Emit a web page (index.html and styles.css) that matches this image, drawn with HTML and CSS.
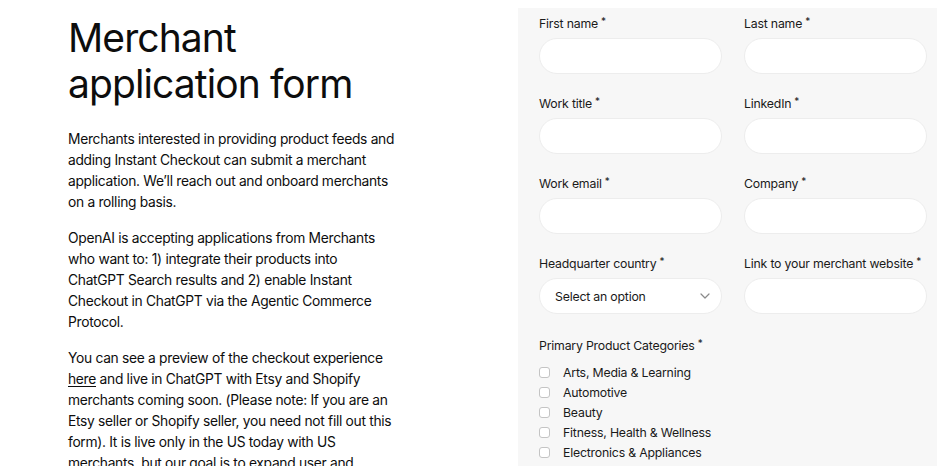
FILE: index.html
```html
<!DOCTYPE html>
<html lang="en">
<head>
<meta charset="utf-8">
<title>Merchant application form</title>
<link rel="stylesheet" href="styles.css">
</head>
<body>
<div class="page">
  <section class="intro">
    <h1 class="title">Merchant application form</h1>
    <p class="para">Merchants interested in providing product feeds and adding Instant Checkout can submit a merchant application. We’ll reach out and onboard merchants on a rolling basis.</p>
    <p class="para">OpenAI is accepting applications from Merchants who want to: 1) integrate their products into ChatGPT Search results and 2) enable Instant Checkout in ChatGPT via the Agentic Commerce Protocol.</p>
    <p class="para">You can see a preview of the checkout experience <a class="link" href="#">here</a> and live in ChatGPT with Etsy and Shopify merchants coming soon. (Please note: If you are an Etsy seller or Shopify seller, you need not fill out this form). It is live only in the US today with US merchants, but our goal is to expand user and merchant access over time.</p>
  </section>
  <form class="panel">
    <div class="grid">
      <label class="field"><span class="label">First name<span class="req">*</span></span><span class="input"></span></label>
      <label class="field"><span class="label">Last name<span class="req">*</span></span><span class="input"></span></label>
      <label class="field"><span class="label">Work title<span class="req">*</span></span><span class="input"></span></label>
      <label class="field"><span class="label">LinkedIn<span class="req">*</span></span><span class="input"></span></label>
      <label class="field"><span class="label">Work email<span class="req">*</span></span><span class="input"></span></label>
      <label class="field"><span class="label">Company<span class="req">*</span></span><span class="input"></span></label>
      <label class="field"><span class="label">Headquarter country<span class="req">*</span></span>
        <span class="input select"><span class="placeholder">Select an option</span>
          <svg class="chev" width="10" height="6" viewBox="0 0 10 6"><path d="M1 1l4 4 4-4" fill="none" stroke="#8a8a8a" stroke-width="1.2" stroke-linecap="round" stroke-linejoin="round"/></svg>
        </span>
      </label>
      <label class="field"><span class="label">Link to your merchant website<span class="req">*</span></span><span class="input"></span></label>
    </div>
    <div class="cats">
      <span class="label">Primary Product Categories<span class="req">*</span></span>
      <ul class="checks">
        <li class="check"><span class="box"></span>Arts, Media &amp; Learning</li>
        <li class="check"><span class="box"></span>Automotive</li>
        <li class="check"><span class="box"></span>Beauty</li>
        <li class="check"><span class="box"></span>Fitness, Health &amp; Wellness</li>
        <li class="check"><span class="box"></span>Electronics &amp; Appliances</li>
      </ul>
    </div>
  </form>
</div>
</body>
</html>
```
FILE: styles.css
```css
* { box-sizing: border-box; }
html, body { margin: 0; padding: 0; background: #fff; }
body {
  font-family: Inter, "Noto Sans", "Liberation Sans", sans-serif;
  color: #0d0d0d;
  overflow: hidden;
  height: 466px;
}
.page {
  display: flex;
  align-items: flex-start;
}
.intro {
  width: 518px;
  flex: none;
  padding: 15px 0 0 68px;
}
.title {
  margin: 0 0 22px;
  font-size: 39px;
  line-height: 46px;
  font-weight: 400;
  letter-spacing: -0.9px;
  width: 330px;
}
.para {
  margin: 0 0 15px;
  font-size: 13.8px;
  line-height: 21px;
  letter-spacing: -0.3px;
  width: 328px;
}
.link { color: inherit; text-decoration: underline; text-underline-offset: 2px; }
.panel {
  flex: 1;
  margin-top: 8px;
  background: #f7f7f7;
  padding: 7px 10px 0 21px;
  min-height: 460px;
}
.grid {
  display: grid;
  grid-template-columns: 183px 183px;
  column-gap: 22px;
  row-gap: 21px;
}
.field { display: flex; flex-direction: column; gap: 5px; }
.label {
  display: block;
  font-size: 12.3px;
  line-height: 18px;
  letter-spacing: -0.2px;
  color: #1a1a1a;
  white-space: nowrap;
}
.req { font-size: 10px; line-height: 0; vertical-align: 3px; margin-left: 3px; }
.input {
  display: flex;
  align-items: center;
  height: 36px;
  border-radius: 18px;
  background: #fff;
  border: 1px solid #ededed;
}
.select { justify-content: space-between; padding: 0 11px 0 15px; }
.placeholder { font-size: 12.3px; letter-spacing: -0.2px; color: #1a1a1a; }
.cats { margin-top: 23px; }
.checks { list-style: none; margin: 7px 0 0; padding: 0; }
.check {
  display: flex;
  align-items: center;
  height: 20px;
  font-size: 12.3px;
  letter-spacing: -0.2px;
  color: #1a1a1a;
}
.box {
  width: 11px;
  height: 11px;
  border: 1px solid #c4c4c4;
  border-radius: 3px;
  background: #fff;
  margin-right: 13px;
}
```
